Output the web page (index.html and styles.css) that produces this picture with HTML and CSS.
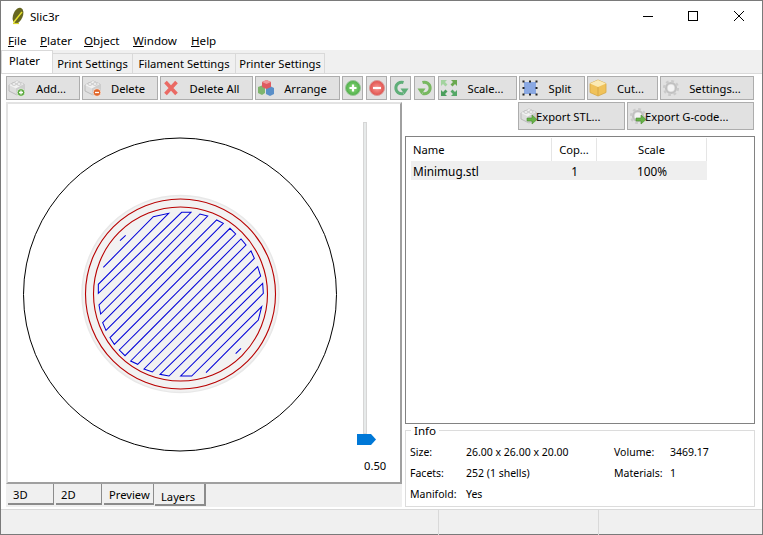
FILE: index.html
```html
<!DOCTYPE html>
<html lang="en">
<head>
  <meta charset="UTF-8" />
  <title>Slic3r</title>
  <link rel="stylesheet" href="styles.css">
</head>
<body>
  <div class="window">
    <div class="titlebar">
      <svg class="logo" width="14" height="18" viewBox="0 0 14 18">
        <ellipse cx="7" cy="8.500" rx="4.800" ry="8.200" fill="#66661f" transform="rotate(22 7 8.500)"/>
        <path d="M2.500 15.500L11 5" fill="none" stroke="#e8e42e" stroke-width="1.400"/>
        <path d="M2 16.500H8" stroke="#d8d42a" stroke-width="1.200"/>
      </svg>
      <span class="app-name">Slic3r</span>
      <div class="win-controls">
        <svg width="143" height="30" viewBox="0 0 143 30">
          <path d="M23 15.500H33" stroke="#000" fill="none"/>
          <rect x="68.500" y="10.500" width="9" height="9" stroke="#000" fill="none"/>
          <path d="M114 10L124 20M124 10L114 20" stroke="#000" fill="none"/>
        </svg>
      </div>
    </div>
    <div class="menubar">
      <span class="menu-item m-file"><u>F</u>ile</span>
      <span class="menu-item m-plater"><u>P</u>later</span>
      <span class="menu-item m-object"><u>O</u>bject</span>
      <span class="menu-item m-window"><u>W</u>indow</span>
      <span class="menu-item m-help"><u>H</u>elp</span>
    </div>

    <div class="tabs">
      <div class="tab tab-plater active">Plater</div>
      <div class="tab tab-print">Print Settings</div>
      <div class="tab tab-filament">Filament Settings</div>
      <div class="tab tab-printer">Printer Settings</div>
    </div>

    <div class="panel">
      <div class="toolbar">
        <button class="btn w-add">
          <svg width="18" height="18" viewBox="0 0 18 18"><use href="#brick"/><circle cx="13" cy="13.500" r="3.800" fill="#5aa83c" stroke="#fff" stroke-width=".6"/><path d="M11 13.500h4M13 11.500v4" stroke="#fff" stroke-width="1.300"/></svg>
          <span>Add...</span>
        </button>
        <button class="btn w-delete">
          <svg width="18" height="18" viewBox="0 0 18 18"><use href="#brick"/><circle cx="13" cy="13.500" r="3.800" fill="#e0662a" stroke="#fff" stroke-width=".6"/><path d="M11 13.500h4" stroke="#fff" stroke-width="1.300"/></svg>
          <span>Delete</span>
        </button>
        <button class="btn w-delall">
          <svg width="18" height="18" viewBox="0 0 18 18"><path d="M3.500 3L14.500 15M14.500 3L3.500 15" stroke="#ea6a64" stroke-width="3.600"/></svg>
          <span>Delete All</span>
        </button>
        <button class="btn w-arrange">
          <svg width="18" height="18" viewBox="0 0 18 18">
            <path d="M1 8l4-1.500 3 1.500v6l-3 2-4-2z" fill="#7fb56e"/>
            <path d="M9 9l4-2 4 2v6l-4 2-4-2z" fill="#5a8fc8"/>
            <path d="M5 3l4.500-2 4.500 2v5l-4.500 2L5 8z" fill="#df5a60"/>
            <path d="M5 3l4.500 2 4.500-2-4.500-2z" fill="#ee9a9c"/>
          </svg>
          <span>Arrange</span>
        </button>
        <button class="btn small">
          <svg width="18" height="18" viewBox="0 0 18 18"><circle cx="9" cy="9" r="7.500" fill="url(#go)" stroke="#9cc79a"/><path d="M5.500 9h7M9 5.500v7" stroke="#fff" stroke-width="2.200"/></svg>
        </button>
        <button class="btn small">
          <svg width="18" height="18" viewBox="0 0 18 18"><circle cx="9" cy="9" r="7.500" fill="url(#stop)" stroke="#d99a98"/><path d="M5 9h8" stroke="#fff" stroke-width="2.200"/></svg>
        </button>
        <button class="btn small">
          <svg width="18" height="18" viewBox="0 0 18 18"><use href="#turn" class="turn-left"/></svg>
        </button>
        <button class="btn small">
          <svg width="18" height="18" viewBox="0 0 18 18"><use href="#turn" class="turn-right" transform="matrix(-1 0 0 1 18 0)"/></svg>
        </button>
        <button class="btn w-scale">
          <svg width="18" height="18" viewBox="0 0 18 18">
            <path d="M1 1h6L5 3l2.500 2.500-2 2L3 5 1 7z" fill="#a4d3a0"/>
            <path d="M17 1v6l-2-2-2.500 2.500-2-2L13 3l-2-2z" fill="#6aa84f"/>
            <path d="M1 17v-6l2 2 2.500-2.500 2 2L5 15l2 2z" fill="#4a9e5c"/>
            <path d="M17 17h-6l2-2-2.500-2.500 2-2L15 13l2-2z" fill="#55a868"/>
          </svg>
          <span>Scale...</span>
        </button>
        <button class="btn w-split">
          <svg width="18" height="18" viewBox="0 0 18 18">
            <rect x="3" y="3" width="12" height="12" fill="#8aa8e2"/>
            <path d="M1.500 1.500h2v2h-2zM8 1.500h2v2H8zM14.500 1.500h2v2h-2zM1.500 8h2v2h-2zM14.500 8h2v2h-2zM1.500 14.500h2v2h-2zM8 14.500h2v2H8zM14.500 14.500h2v2h-2z" fill="#222"/>
          </svg>
          <span>Split</span>
        </button>
        <button class="btn w-cut">
          <svg width="18" height="18" viewBox="0 0 18 18">
            <path d="M9 1l8 3.500v9L9 17l-8-3.500v-9z" fill="#f0c25a" stroke="#d6a848" stroke-width=".8"/>
            <path d="M1 4.500L9 8l8-3.500L9 1z" fill="#fbeab4"/>
            <path d="M9 8v9" stroke="#d6a848"/>
          </svg>
          <span>Cut...</span>
        </button>
        <button class="btn w-settings">
          <svg width="18" height="18" viewBox="0 0 18 18"><use href="#gear"/></svg>
          <span>Settings...</span>
        </button>
      </div>

      <div class="main">
        <div class="left">
          <div class="canvas">
            <svg class="plate" width="392" height="378" viewBox="8 104 392 378">
              <circle cx="180" cy="294.500" r="156.500" fill="none" stroke="#000"/>
              <circle cx="180.500" cy="294" r="98.500" fill="#f2f2f2" stroke="#e8e8e8" stroke-width="1.500"/>
              <circle cx="180.500" cy="294" r="95" fill="none" stroke="#b80000" stroke-width="1.100"/>
              <circle cx="180.500" cy="294" r="87" fill="none" stroke="#b80000" stroke-width="1.100"/>
              <g transform="translate(70 190) scale(.33333)">
                <path class="hatch" d="M100 232L250 80L296 70L85 283L85 310L335 67L363 67L87 345L92 372L390 72L413 78L98 398L108 421L440 90L460 100L120 443L133 463L480 115L497 132L148 480L165 497L513 147L528 165L182 513L203 523L543 183L553 205L222 537L247 546L563 230L572 258L270 553L297 558L578 280L580 310L332 558L365 558L575 350L565 390L408 548M150 152L167 136M497 491L513 475"/>
              </g>
            </svg>
            <div class="slider">
              <div class="track"></div>
              <svg class="thumb" width="20" height="11" viewBox="0 0 20 11"><path d="M0 0H14L19 5.500L14 11H0Z" fill="#0078d7"/></svg>
              <div class="slider-value">0.50</div>
            </div>
          </div>
          <div class="bottom-tabs">
            <div class="btab w-3d">3D</div>
            <div class="btab w-2d">2D</div>
            <div class="btab w-preview">Preview</div>
            <div class="btab w-layers active">Layers</div>
          </div>
        </div>

        <div class="right">
          <div class="export-row">
            <button class="btn w-stl">
              <svg width="18" height="18" viewBox="0 0 18 18"><use href="#brick"/><use href="#arrow"/></svg>
              <span>Export STL...</span>
            </button>
            <button class="btn w-gcode">
              <svg width="18" height="18" viewBox="0 0 18 18"><use href="#gear"/><use href="#arrow"/></svg>
              <span>Export G-code...</span>
            </button>
          </div>

          <div class="list">
            <div class="list-row list-head">
              <div class="col-name">Name</div>
              <div class="col-copies">Cop...</div>
              <div class="col-scale">Scale</div>
            </div>
            <div class="list-row list-item">
              <div class="col-name">Minimug.stl</div>
              <div class="col-copies">1</div>
              <div class="col-scale">100%</div>
            </div>
          </div>

          <fieldset class="info">
            <legend>Info</legend>
            <div class="info-grid">
              <span>Size:</span><span>26.00 x 26.00 x 20.00</span><span>Volume:</span><span>3469.17</span>
              <span>Facets:</span><span>252 (1 shells)</span><span>Materials:</span><span>1</span>
              <span>Manifold:</span><span>Yes</span>
            </div>
          </fieldset>
        </div>
      </div>
    </div>

    <div class="statusbar">
      <div class="status-cell s1"></div>
      <div class="status-cell s2"></div>
      <div class="status-cell s3"></div>
    </div>
  </div>

  <svg class="defs" width="0" height="0">
    <defs>
      <radialGradient id="go">
        <stop offset="0" stop-color="#8fdc7c"/>
        <stop offset="1" stop-color="#4fae4a"/>
      </radialGradient>
      <radialGradient id="stop">
        <stop offset="0" stop-color="#f79a94"/>
        <stop offset="1" stop-color="#e0504c"/>
      </radialGradient>
      <g id="turn">
        <path d="M11.500 3.500A5.800 5.800 0 1 0 11.500 14.500" fill="none" stroke="currentColor" stroke-width="3"/>
        <path d="M8.500 9.500h8l-4 6z" fill="currentColor"/>
      </g>
      <g id="brick">
        <path d="M1 6l8-4 7 3v7l-7 4-8-4z" fill="#dedede" stroke="#b0b0b0" stroke-width=".8"/>
        <path d="M1 6l8-4 7 3-8 4.500z" fill="#f2f2f2"/>
        <path d="M8 9.500V16l8-4V5z" fill="#cecece"/>
        <ellipse cx="6" cy="5" rx="2.200" ry="1.300" fill="#fafafa" stroke="#b0b0b0" stroke-width=".7"/>
        <ellipse cx="11" cy="5" rx="2.200" ry="1.300" fill="#fafafa" stroke="#b0b0b0" stroke-width=".7"/>
      </g>
      <g id="gear">
        <circle cx="9" cy="9" r="3.200" fill="#f4f4f4"/>
        <circle cx="9" cy="9" r="5" fill="none" stroke="#c0c0c0" stroke-width="2.200"/>
        <circle cx="9" cy="9" r="6.800" fill="none" stroke="#cacaca" stroke-width="2.600" stroke-dasharray="2.700 2.640"/>
      </g>
      <path id="arrow" d="M7 11h5V8l5 4.500L12 17v-3H7z" fill="#67b348" stroke="#4a8f33" stroke-width=".6"/>
    </defs>
  </svg>
</body>
</html>
```

FILE: styles.css
```css
* {
  box-sizing: border-box;
}
html, body {
  margin: 0;
  height: 100%;
}
body {
  font-family: "Noto Sans", sans-serif;
  font-size: 11.2px;
  color: #000;
  overflow: hidden;
}
.window {
  width: 763px;
  height: 535px;
  border: 1px solid #7a7a7a;
  background: #f0f0f0;
  display: flex;
  flex-direction: column;
}
.titlebar {
  height: 29px;
  flex: none;
  background: #fff;
  display: flex;
  align-items: center;
  padding-left: 10px;
  font-size: 11.6px;
}
.app-name {
  margin-left: 5px;
  padding-top: 1px;
}
.win-controls {
  margin-left: auto;
  margin-right: -1px;
  height: 30px;
}
.menubar {
  height: 20px;
  flex: none;
  background: #fff;
  display: flex;
  align-items: center;
  padding-left: 7px;
}
.menu-item {
  font-size: 11.6px;
}
.m-file { width: 32px; }
.m-plater { width: 44px; }
.m-object { width: 49px; }
.m-window { width: 58px; }

.tabs {
  height: 23px;
  flex: none;
  display: flex;
  align-items: flex-end;
}
.tab {
  height: 20px;
  border: 1px solid #d9d9d9;
  border-bottom: none;
  margin-right: -1px;
  display: flex;
  justify-content: center;
  align-items: center;
  background: #f0f0f0;
}
.tab.active {
  height: 23px;
  background: #fff;
  padding: 0 5px 3px 0;
  position: relative;
  z-index: 1;
}
.tab-plater { width: 52px; }
.tab-print { width: 81px; }
.tab-filament { width: 104px; }
.tab-printer { width: 90px; }

.panel {
  height: 437px;
  flex: none;
  background: #fff;
  border-top: 1px solid #d9d9d9;
  border-bottom: 1px solid #d9d9d9;
  padding: 2px 6px 0 5px;
}
.toolbar {
  display: flex;
  gap: 2px;
  height: 24px;
}
.btn {
  height: 24px;
  padding: 0 1px;
  border: 1px solid #adadad;
  background: #e1e1e1;
  font: inherit;
  color: #000;
  display: flex;
  align-items: center;
}
.btn span {
  flex: 1;
  text-align: center;
  padding-right: 2px;
}
.btn.small {
  width: 21px;
  margin-right: 1px;
  justify-content: center;
  padding: 0;
}
.turn-left { color: #5fae78; }
.turn-right { color: #78b860; }
.w-add { width: 74px; }
.w-delete { width: 76px; }
.w-delall { width: 93px; }
.w-arrange { width: 85px; }
.w-scale { width: 79px; }
.w-split { width: 66px; }
.w-cut { width: 71px; }
.w-settings { width: 94px; }

.main {
  display: flex;
  height: 408px;
  margin-top: 2px;
}
.left {
  width: 396px;
  flex: none;
  display: flex;
  flex-direction: column;
}
.canvas {
  height: 382px;
  flex: none;
  background: #fff;
  border: 2px solid #e3e3e3;
  border-right-color: #a0a0a0;
  border-bottom-color: #a0a0a0;
  position: relative;
}
.plate {
  display: block;
}
.hatch {
  fill: none;
  stroke: #0000d8;
  stroke-width: 3.100;
}
.slider {
  position: absolute;
  left: 349px;
  top: 18px;
  width: 20px;
  height: 350px;
}
.track {
  position: absolute;
  left: 6px;
  top: 0;
  width: 4px;
  height: 312px;
  background: #e7eaea;
  border: 1px solid #d6d6d6;
}
.thumb {
  position: absolute;
  left: 0;
  top: 312px;
}
.slider-value {
  position: absolute;
  left: 7px;
  top: 336px;
  width: 24px;
}
.bottom-tabs {
  height: 23px;
  background: #f0f0f0;
  display: flex;
  gap: 2px;
  padding-left: 2px;
}
.btab {
  height: 21px;
  background: #f0f0f0;
  border-right: 1px solid #8c8c8c;
  border-bottom: 2px solid #8c8c8c;
  padding: 3px 0 0 5px;
}
.btab.active {
  height: 22px;
  margin-left: -1px;
  padding: 5px 0 0 6px;
  border-right-width: 2px;
}
.w-3d, .w-2d { width: 46px; }
.w-preview { width: 50px; }
.w-layers { width: 51px; }

.right {
  width: 354px;
  flex: none;
  padding-left: 3px;
  display: flex;
  flex-direction: column;
}
.export-row {
  display: flex;
  justify-content: flex-end;
  gap: 2px;
  height: 28px;
  padding-right: 2px;
}
.export-row .btn {
  height: 28px;
}
.export-row .btn span {
  flex: none;
  padding-right: 0;
  margin-left: -2px;
}
.w-stl { width: 107px; }
.w-gcode { width: 127px; }

.list {
  margin-top: 6px;
  width: 350px;
  height: 288px;
  background: #fff;
  border: 1px solid #828282;
  padding: 1px 0 0 5px;
}
.list-row {
  display: flex;
  width: 296px;
}
.list-head {
  height: 23px;
  align-items: center;
}
.list-head > div {
  height: 100%;
  display: flex;
  align-items: center;
  border-right: 1px solid #e5e5e5;
}
.list-item {
  height: 19px;
  background: #efefef;
  align-items: center;
  font-size: 11.8px;
}
.col-name {
  width: 141px;
  padding-left: 2px;
}
.col-copies {
  width: 45px;
  text-align: center;
  justify-content: center;
}
.col-scale {
  width: 110px;
  text-align: center;
  justify-content: center;
}

.info {
  margin: -1px 0 0;
  width: 350px;
  height: 84px;
  padding: 3px 4px 0;
  border: 1px solid #dcdcdc;
  background: #fff;
  min-width: 0;
}
.info legend {
  padding: 0 3px;
  margin-left: 1px;
  font-size: 11.6px;
}
.info-grid {
  display: grid;
  grid-template-columns: 56px 148px 56px 1fr;
  grid-auto-rows: 21px;
  align-items: center;
  font-size: 10.5px;
}

.statusbar {
  height: 26px;
  flex: none;
  display: flex;
}
.status-cell {
  height: 100%;
}
.s1 { width: 437px; }
.s2 { width: 160px; border-left: 1px solid #d9d9d9; }
.s3 { flex: 1; border-left: 1px solid #d9d9d9; }
.defs {
  position: absolute;
}
```
